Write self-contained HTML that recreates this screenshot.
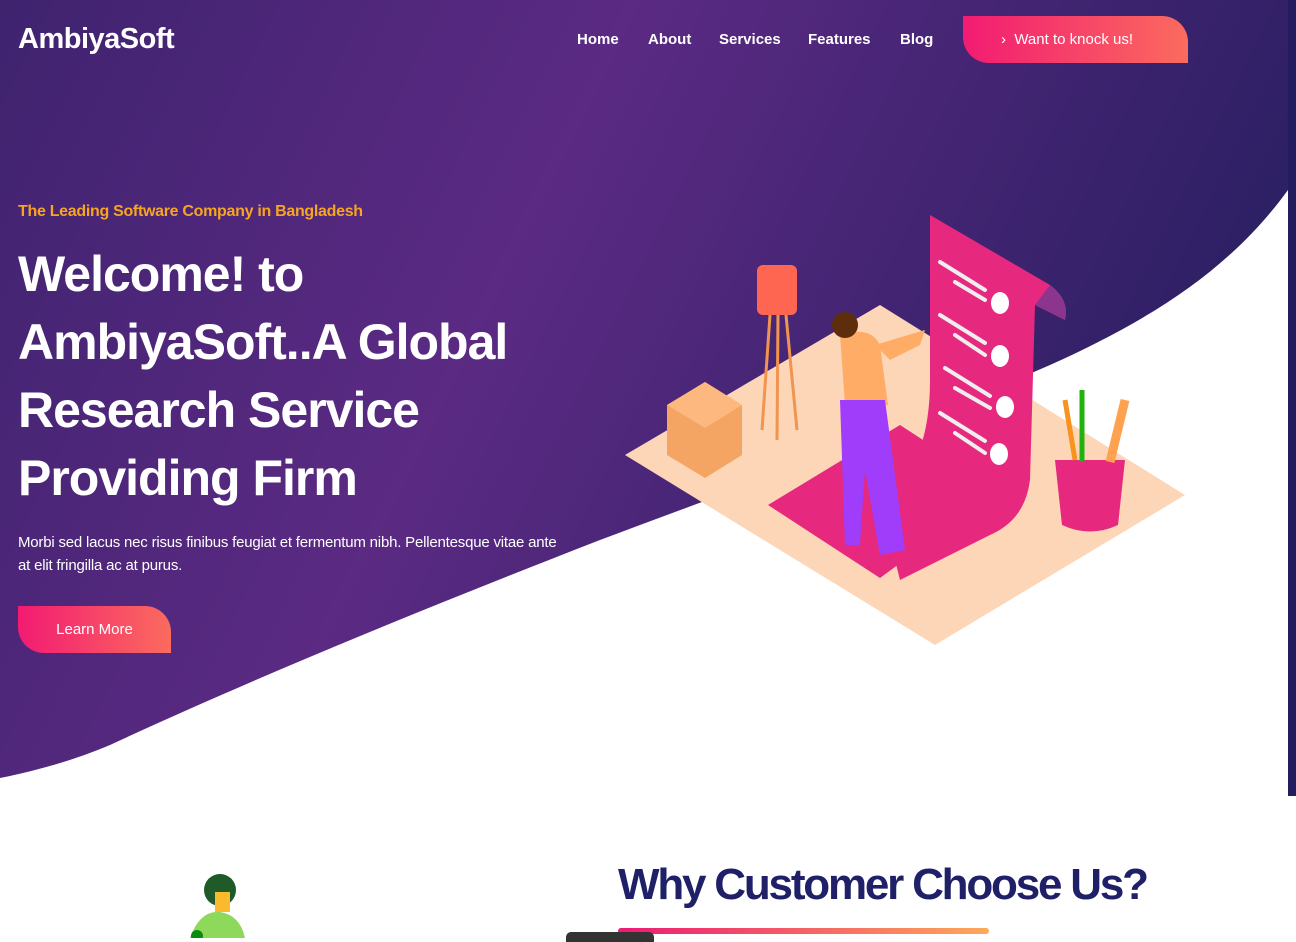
<!DOCTYPE html>
<html><head><meta charset="utf-8"><style>
*{margin:0;padding:0;box-sizing:border-box}
body{width:1296px;height:938px;overflow:hidden;background:#fff;font-family:"Liberation Sans",sans-serif;position:relative}
.abs{position:absolute}
.nav a{position:absolute;top:31px;color:#fff;font-size:15px;font-weight:bold;text-decoration:none}
.btn{background:linear-gradient(90deg,#f21b72,#fb6b5e);color:#fff;border-radius:0 26px 0 26px}
</style></head><body>
<svg class="abs" style="left:0;top:0" width="1296" height="800" viewBox="0 0 1296 800">
<defs>
<linearGradient id="g" x1="0" y1="0" x2="1" y2="0.3">
<stop offset="0" stop-color="#3f236f"/><stop offset="0.45" stop-color="#5b2a83"/><stop offset="1" stop-color="#2b1f63"/></linearGradient>
</defs>
<path d="M0 0H1296V796H1288V190C1230 270 1150 320 1050 365C900 430 760 480 600 540C420 610 250 680 110 745C70 762 30 772 0 778Z" fill="url(#g)"/>
<rect x="1288" y="0" width="8" height="796" fill="#231c5e"/>
<path d="M625 455 L880 305 L1185 495 L935 645 Z" fill="#fdd6b8"/>
<path d="M768 505 L900 425 L1000 490 L880 578 Z" fill="#e6287e"/>
<path d="M930 215 L1050 285 Q1070 300 1065 320 L1035 305 L1030 480 Q1025 520 990 535 L900 580 L880 500 Q930 470 930 380 Z" fill="#e6287e"/>
<path d="M1050 285 Q1070 300 1065 320 L1035 305 Z" fill="#8b358f"/>
<g stroke="#eee" stroke-width="4" stroke-linecap="round"><line x1="940" y1="262" x2="985" y2="290"/><line x1="955" y1="282" x2="985" y2="300"/><line x1="940" y1="315" x2="985" y2="343"/><line x1="955" y1="335" x2="985" y2="355"/><line x1="945" y1="368" x2="990" y2="396"/><line x1="955" y1="388" x2="990" y2="408"/><line x1="940" y1="413" x2="985" y2="441"/><line x1="955" y1="433" x2="985" y2="453"/></g>
<g fill="#fff"><ellipse cx="1000" cy="303" rx="9" ry="11"/><ellipse cx="1000" cy="356" rx="9" ry="11"/><ellipse cx="1005" cy="407" rx="9" ry="11"/><ellipse cx="999" cy="454" rx="9" ry="11"/></g>
<rect x="757" y="265" width="40" height="50" rx="6" fill="#ff6652"/>
<g stroke="#f09450" stroke-width="3"><line x1="770" y1="315" x2="762" y2="430"/><line x1="778" y1="315" x2="777" y2="440"/><line x1="786" y1="315" x2="797" y2="430"/></g>
<path d="M667 405 L705 382 L742 405 L742 455 L705 478 L667 455Z" fill="#f4a463"/>
<path d="M667 405 L705 382 L742 405 L705 428Z" fill="#fcb87f"/>
<path d="M840 335 Q870 325 880 345 L888 405 L845 405Z" fill="#ffac67"/>
<path d="M840 400 L885 400 L905 550 L880 555 L865 470 L860 545 L845 545Z" fill="#a03dfb"/>
<circle cx="845" cy="325" r="13" fill="#5e2d0b"/>
<path d="M875 345 L925 330 L920 345 L890 360Z" fill="#ffac67"/>
<path d="M1055 460 L1125 460 L1118 525 Q1090 538 1062 525Z" fill="#e6287e"/>
<line x1="1065" y1="400" x2="1075" y2="460" stroke="#f7931e" stroke-width="5"/><line x1="1082" y1="390" x2="1082" y2="462" stroke="#21b20d" stroke-width="5"/><line x1="1125" y1="400" x2="1110" y2="462" stroke="#ffa24f" stroke-width="9"/>
</svg>
<div class="abs" style="left:18px;top:23px;color:#fff;font-size:29px;font-weight:bold;letter-spacing:-0.5px">AmbiyaSoft</div>
<div class="nav"><a style="left:577px">Home</a><a style="left:648px">About</a><a style="left:719px">Services</a><a style="left:808px">Features</a><a style="left:900px">Blog</a></div>
<div class="abs btn" style="left:963px;top:16px;width:225px;height:47px;font-size:15px;line-height:47px;padding-left:38px">›&nbsp; Want to knock us!</div>
<div class="abs" style="left:18px;top:203px;color:#f7a521;font-size:16px;font-weight:bold;letter-spacing:-0.3px">The Leading Software Company in Bangladesh</div>
<div class="abs" style="left:18px;top:240px;color:#fff;font-size:50px;font-weight:bold;line-height:68px;width:560px;letter-spacing:-1px">Welcome! to AmbiyaSoft..A Global Research Service Providing Firm</div>
<div class="abs" style="left:18px;top:531px;color:#fff;font-size:15px;line-height:23px;width:550px;letter-spacing:-0.2px">Morbi sed lacus nec risus finibus feugiat et fermentum nibh. Pellentesque vitae ante at elit fringilla ac at purus.</div>
<div class="abs btn" style="left:18px;top:606px;width:153px;height:47px;font-size:15px;line-height:47px;text-align:center">Learn More</div>
<div class="abs" style="left:618px;top:860px;color:#1f2068;font-size:44px;font-weight:bold;letter-spacing:-2.2px">Why Customer Choose Us?</div>
<div class="abs" style="left:618px;top:928px;width:371px;height:6px;border-radius:3px;background:linear-gradient(90deg,#ec1a73,#fda95a)"></div>
<div class="abs" style="left:566px;top:932px;width:88px;height:10px;border-radius:5px 5px 0 0;background:#333"></div>
<svg class="abs" style="left:185px;top:870px" width="65" height="68"><circle cx="35" cy="20" r="16" fill="#1f5a29"/><rect x="30" y="22" width="15" height="20" fill="#fbb92e"/><path d="M5 68 Q15 40 35 42 Q55 45 60 68Z" fill="#8ed95c"/><circle cx="12" cy="66" r="6" fill="#0a8a13"/></svg>
</body></html>
